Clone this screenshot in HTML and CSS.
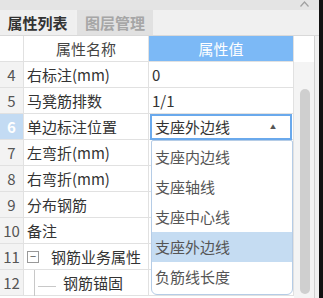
FILE: index.html
```html
<!DOCTYPE html>
<html lang="zh">
  <head>
    <meta charset="UTF-8" />
    <title>属性列表</title>
    <link rel="stylesheet" href="styles.css">
  </head>
  <body>
    <div id="panel">
      <div class="topStrip">
        <svg class="caret" width="9" height="6" viewBox="0 0 9 6"><path d="M0.5 5.5 L4.5 1 L8.5 5.5" fill="none" stroke="#a0a0a0" stroke-width="1.2"/></svg>
      </div>
      <div class="tabs">
        <div class="tab active">属性列表</div>
        <div class="tab">图层管理</div>
      </div>
      <div class="body">
        <div class="grid">
          <div class="row head">
            <div class="num"></div>
            <div class="name">属性名称</div>
            <div class="val">属性值</div>
          </div>
          <div class="row">
            <div class="num">4</div>
            <div class="name">右标注(mm)</div>
            <div class="val">0</div>
          </div>
          <div class="row">
            <div class="num">5</div>
            <div class="name">马凳筋排数</div>
            <div class="val">1/1</div>
          </div>
          <div class="row current">
            <div class="num">6</div>
            <div class="name">单边标注位置</div>
            <div class="val"><div class="combo">支座外边线<span class="arrow">&#9650;</span></div></div>
          </div>
          <div class="row">
            <div class="num">7</div>
            <div class="name">左弯折(mm)</div>
            <div class="val"></div>
          </div>
          <div class="row">
            <div class="num">8</div>
            <div class="name">右弯折(mm)</div>
            <div class="val"></div>
          </div>
          <div class="row">
            <div class="num">9</div>
            <div class="name">分布钢筋</div>
            <div class="val"></div>
          </div>
          <div class="row">
            <div class="num">10</div>
            <div class="name">备注</div>
            <div class="val"></div>
          </div>
          <div class="row">
            <div class="num">11</div>
            <div class="name group"><span class="toggle">&minus;</span>钢筋业务属性</div>
            <div class="val"></div>
          </div>
          <div class="row">
            <div class="num">12</div>
            <div class="name child"><span class="branch"></span>钢筋锚固</div>
            <div class="val"></div>
          </div>

          <div class="popup">
            <div class="item">支座内边线</div>
            <div class="item">支座轴线</div>
            <div class="item">支座中心线</div>
            <div class="item selected">支座外边线</div>
            <div class="item">负筋线长度</div>
          </div>
        </div>
        <div class="scroll">
          <div class="scrollHead"></div>
          <div class="track"><div class="thumb"></div></div>
        </div>
        <div class="edge"></div>
      </div>
    </div>
  </body>
</html>
```

FILE: styles.css
```css
body {
  margin: 0;
  width: 323px;
  height: 298px;
  overflow: hidden;
  background-color: #111;
  font-family: "Noto Sans CJK SC", "Noto Sans", sans-serif;
  font-size: 15px;
  color: #333;
}
#panel {
  width: 319px;
  height: 298px;
  background-color: #f0f0f0;
  display: flex;
  flex-direction: column;
}
.topStrip {
  height: 10px;
  background-color: #e4e4e4;
  position: relative;
}
.caret {
  position: absolute;
  right: 10px;
  top: 1px;
}
.tabs {
  height: 25px;
  display: flex;
  background-color: #f0f0f0;
  border-bottom: 1px solid #d9d9d9;
}
.tab {
  width: 76px;
  margin-right: 2px;
  text-align: center;
  line-height: 25px;
  font-weight: bold;
  color: #a6a6a6;
  background-color: #e1e1e1;
}
.tab.active {
  width: 75px;
  color: #333;
  background-color: #efefef;
}
.body {
  flex: 1;
  display: flex;
}
.grid {
  width: 294px;
  position: relative;
  background-color: #fff;
}
.row {
  display: flex;
  height: 26px;
}
.row > div {
  box-sizing: border-box;
  height: 26px;
  line-height: 25px;
  border-bottom: 1px solid #e1e1e1;
  border-right: 1px solid #e1e1e1;
}
.num {
  width: 24px;
  text-align: center;
  color: #555;
  background-color: #f3f3f3;
}
.name {
  width: 125px;
  padding-left: 3px;
  white-space: nowrap;
}
.val {
  width: 145px;
  padding-left: 3px;
}
.head .num {
  background-color: #fff;
}
.head .name {
  text-align: center;
  padding-left: 0;
  color: #444;
}
.head .val {
  background-color: #7cb9f6;
  color: #fff;
  text-align: center;
  padding-left: 0;
}
.current .num {
  background-color: #c3dbf3;
  color: #fff;
  font-weight: bold;
}
.current .val {
  padding: 0 1px 0 1px;
}
.combo {
  box-sizing: border-box;
  height: 26px;
  border: 2px solid #6aa9ec;
  padding-left: 3px;
  line-height: 22px;
  position: relative;
}
.arrow {
  position: absolute;
  right: 14px;
  top: 0;
  font-size: 6px;
  color: #555;
}
.group {
  display: flex;
  align-items: center;
}
.toggle {
  box-sizing: border-box;
  width: 12px;
  height: 12px;
  border: 1px solid #999;
  font-size: 11px;
  line-height: 9px;
  text-align: center;
  color: #555;
  margin-right: 12px;
  position: relative;
}
.child {
  display: flex;
  align-items: center;
  padding-left: 10px;
}
.branch {
  width: 20px;
  height: 26px;
  border-left: 1px solid #c8c8c8;
  position: relative;
  margin-right: 8px;
}
.branch::after {
  content: "";
  position: absolute;
  left: 3px;
  top: 16px;
  width: 18px;
  border-top: 1px solid #c8c8c8;
}
.popup {
  position: absolute;
  left: 151px;
  top: 104px;
  width: 142px;
  height: 155px;
  box-sizing: border-box;
  border: 1px solid #b5cce6;
  border-radius: 2px 2px 6px 6px;
  background-color: #fff;
  overflow: hidden;
  padding-top: 1px;
}
.item {
  height: 30px;
  line-height: 30px;
  padding-left: 3px;
  color: #555;
}
.item.selected {
  background-color: #c5dcf2;
}
.scroll {
  width: 20px;
  border-right: 1px solid #d0d0d0;
  display: flex;
  flex-direction: column;
}
.scrollHead {
  height: 26px;
  background-color: #fff;
}
.track {
  flex: 1;
  background-color: #f4f4f4;
  position: relative;
}
.thumb {
  position: absolute;
  left: 6px;
  top: 27px;
  width: 10px;
  bottom: 4px;
  border-radius: 5px;
  background-color: #cfcfcf;
}
.edge {
  width: 4px;
  background-color: #f0f0f0;
}
```
